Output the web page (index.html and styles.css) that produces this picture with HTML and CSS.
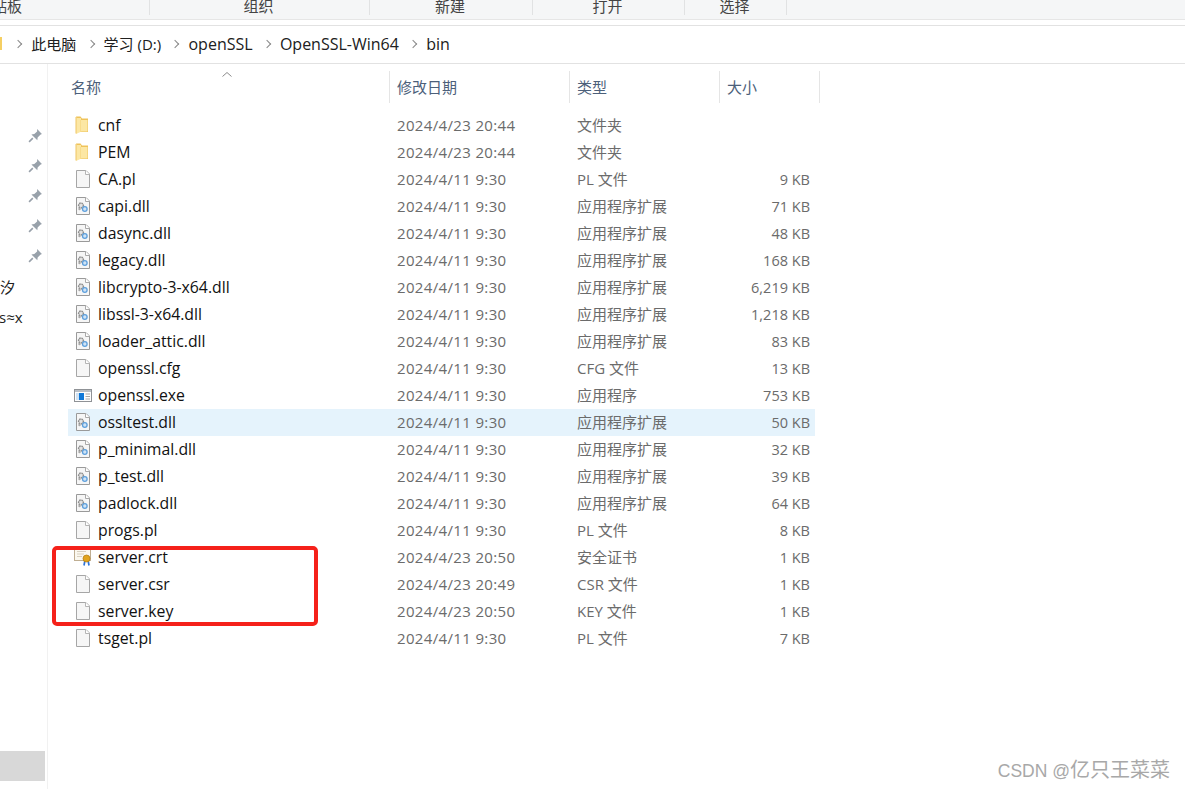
FILE: index.html
```html
<!DOCTYPE html>
<html lang="zh-CN">
<head>
    <meta charset="UTF-8">
    <title>bin</title>
    <link rel="stylesheet" href="styles.css">
</head>
<body>
    <svg class="defs" width="0" height="0">
        <symbol id="i-folder" viewBox="0 0 16 18">
            <path d="M1 .5h4.500l1.500 2h6v13.500H5z" fill="#efc35a"/>
            <path d="M1 1.500l1 .5h4v2h6.500v11.500H6.500L1 18z" fill="#fce7a4"/>
            <path d="M5.500 4v12" stroke="#f8dc8c" fill="none"/>
            <path d="M1 1v16.500" stroke="#eec565" fill="none"/>
        </symbol>
        <symbol id="i-file" viewBox="0 0 16 18">
            <path d="M1.500.5h9.500l3.500 3.500v13.500h-13z" fill="#f6f6f6" stroke="#a6a6a6"/>
            <path d="M10.500.5v4h4" fill="#fff" stroke="#b5b5b5"/>
        </symbol>
        <symbol id="i-dll" viewBox="0 0 16 18">
            <path d="M1.500.5h9.500l3.500 3.500v13.500h-13z" fill="#f6f6f6" stroke="#9a9a9a"/>
            <path d="M10.500.5v4h4" fill="#fff" stroke="#aaa"/>
            <circle cx="6" cy="8.500" r="2.400" fill="#e4e4e4" stroke="#8d8d8d" stroke-width="1.500" stroke-dasharray="1.500 .6"/>
            <circle cx="9.800" cy="12" r="2.300" fill="#cfe3f5" stroke="#5d9fdc" stroke-width="1.300"/>
            <circle cx="4.500" cy="12" r="1.200" fill="#a8a8a8"/>
        </symbol>
        <symbol id="i-exe" viewBox="0 0 20 18">
            <rect x="1.500" y="3.500" width="17" height="12" fill="#fdfdfd" stroke="#8f9296"/>
            <rect x="2" y="4" width="16" height="2" fill="#b9bfc6"/>
            <rect x="3" y="7" width="3" height="7" fill="#cfe2f4"/>
            <rect x="6" y="7" width="5" height="7" fill="#0f78d8"/>
            <path d="M12.500 8h4.500M12.500 10.500h4.500M12.500 13h4.500" stroke="#a8a8a8"/>
        </symbol>
        <symbol id="i-crt" viewBox="0 0 20 18">
            <rect x="1.500" y=".5" width="16" height="12" fill="#fbf8ef" stroke="#bfae92"/>
            <path d="M4 3.500h9M4 6h7M4 8.500h5" stroke="#d8d0bf"/>
            <path d="M12 12l-1 5.500M15 12l1 5.500" stroke="#2f74d8" stroke-width="1.700"/>
            <circle cx="13.500" cy="10.500" r="3.500" fill="#e2a41c" stroke="#b07a10" stroke-width=".7"/>
        </symbol>
        <symbol id="i-pin" viewBox="0 0 14 14">
            <path d="M8.500 1l4.500 4.500-1.500.7-2.500 2.600-.3 2.700-5.500-5.500 2.700-.3 2.600-2.500z" fill="#98a1aa"/>
            <path d="M4.500 9.500l-3.500 3.500" stroke="#98a1aa" stroke-width="1.500"/>
        </symbol>
    </svg>

    <div class="ribbon">
        <div class="ribbon-cell ribbon-first"><span>剪贴板</span></div>
        <div class="ribbon-cell"><span>组织</span></div>
        <div class="ribbon-cell"><span>新建</span></div>
        <div class="ribbon-cell"><span>打开</span></div>
        <div class="ribbon-cell"><span>选择</span></div>
    </div>

    <div class="address">
        <span class="addr-folder"></span>
        <span class="chev"></span><span class="crumb crumb-cjk">此电脑</span>
        <span class="chev"></span><span class="crumb crumb-cjk">学习 (D:)</span>
        <span class="chev"></span><span class="crumb">openSSL</span>
        <span class="chev"></span><span class="crumb">OpenSSL-Win64</span>
        <span class="chev"></span><span class="crumb">bin</span>
    </div>

    <div class="main">
        <!-- 左侧导航 -->
        <div class="nav">
            <svg class="pin"><use href="#i-pin"/></svg>
            <svg class="pin"><use href="#i-pin"/></svg>
            <svg class="pin"><use href="#i-pin"/></svg>
            <svg class="pin"><use href="#i-pin"/></svg>
            <svg class="pin"><use href="#i-pin"/></svg>
            <div class="nav-text">汐</div>
            <div class="nav-text nav-text-2">s≈x</div>
            <div class="nav-block"></div>
        </div>

        <!-- 文件列表 -->
        <div class="list">
            <div class="head">
                <div class="head-cell head-name">名称<svg class="sort" viewBox="0 0 10 5"><path d="M.5 4.500L5 .5l4.500 4" fill="none" stroke="#8a8a8a"/></svg></div>
                <div class="head-cell">修改日期</div>
                <div class="head-cell">类型</div>
                <div class="head-cell">大小</div>
            </div>
            <div class="rows">
                <div class="row"><div class="name"><svg class="ico"><use href="#i-folder"/></svg>cnf</div><div class="date">2024/4/23 20:44</div><div class="type">文件夹</div><div class="size"></div></div>
                <div class="row"><div class="name"><svg class="ico"><use href="#i-folder"/></svg>PEM</div><div class="date">2024/4/23 20:44</div><div class="type">文件夹</div><div class="size"></div></div>
                <div class="row"><div class="name"><svg class="ico"><use href="#i-file"/></svg>CA.pl</div><div class="date">2024/4/11 9:30</div><div class="type">PL 文件</div><div class="size">9 KB</div></div>
                <div class="row"><div class="name"><svg class="ico"><use href="#i-dll"/></svg>capi.dll</div><div class="date">2024/4/11 9:30</div><div class="type">应用程序扩展</div><div class="size">71 KB</div></div>
                <div class="row"><div class="name"><svg class="ico"><use href="#i-dll"/></svg>dasync.dll</div><div class="date">2024/4/11 9:30</div><div class="type">应用程序扩展</div><div class="size">48 KB</div></div>
                <div class="row"><div class="name"><svg class="ico"><use href="#i-dll"/></svg>legacy.dll</div><div class="date">2024/4/11 9:30</div><div class="type">应用程序扩展</div><div class="size">168 KB</div></div>
                <div class="row"><div class="name"><svg class="ico"><use href="#i-dll"/></svg>libcrypto-3-x64.dll</div><div class="date">2024/4/11 9:30</div><div class="type">应用程序扩展</div><div class="size">6,219 KB</div></div>
                <div class="row"><div class="name"><svg class="ico"><use href="#i-dll"/></svg>libssl-3-x64.dll</div><div class="date">2024/4/11 9:30</div><div class="type">应用程序扩展</div><div class="size">1,218 KB</div></div>
                <div class="row"><div class="name"><svg class="ico"><use href="#i-dll"/></svg>loader_attic.dll</div><div class="date">2024/4/11 9:30</div><div class="type">应用程序扩展</div><div class="size">83 KB</div></div>
                <div class="row"><div class="name"><svg class="ico"><use href="#i-file"/></svg>openssl.cfg</div><div class="date">2024/4/11 9:30</div><div class="type">CFG 文件</div><div class="size">13 KB</div></div>
                <div class="row"><div class="name"><svg class="ico ico-wide"><use href="#i-exe"/></svg>openssl.exe</div><div class="date">2024/4/11 9:30</div><div class="type">应用程序</div><div class="size">753 KB</div></div>
                <div class="row row-hover"><div class="name"><svg class="ico"><use href="#i-dll"/></svg>ossltest.dll</div><div class="date">2024/4/11 9:30</div><div class="type">应用程序扩展</div><div class="size">50 KB</div></div>
                <div class="row"><div class="name"><svg class="ico"><use href="#i-dll"/></svg>p_minimal.dll</div><div class="date">2024/4/11 9:30</div><div class="type">应用程序扩展</div><div class="size">32 KB</div></div>
                <div class="row"><div class="name"><svg class="ico"><use href="#i-dll"/></svg>p_test.dll</div><div class="date">2024/4/11 9:30</div><div class="type">应用程序扩展</div><div class="size">39 KB</div></div>
                <div class="row"><div class="name"><svg class="ico"><use href="#i-dll"/></svg>padlock.dll</div><div class="date">2024/4/11 9:30</div><div class="type">应用程序扩展</div><div class="size">64 KB</div></div>
                <div class="row"><div class="name"><svg class="ico"><use href="#i-file"/></svg>progs.pl</div><div class="date">2024/4/11 9:30</div><div class="type">PL 文件</div><div class="size">8 KB</div></div>
                <div class="row"><div class="name"><svg class="ico ico-wide"><use href="#i-crt"/></svg>server.crt</div><div class="date">2024/4/23 20:50</div><div class="type">安全证书</div><div class="size">1 KB</div></div>
                <div class="row"><div class="name"><svg class="ico"><use href="#i-file"/></svg>server.csr</div><div class="date">2024/4/23 20:49</div><div class="type">CSR 文件</div><div class="size">1 KB</div></div>
                <div class="row"><div class="name"><svg class="ico"><use href="#i-file"/></svg>server.key</div><div class="date">2024/4/23 20:50</div><div class="type">KEY 文件</div><div class="size">1 KB</div></div>
                <div class="row"><div class="name"><svg class="ico"><use href="#i-file"/></svg>tsget.pl</div><div class="date">2024/4/11 9:30</div><div class="type">PL 文件</div><div class="size">7 KB</div></div>
            </div>
        </div>
    </div>

    <!-- 标注红框和水印 -->
    <div class="mark"></div>
    <div class="watermark"><span class="wm-latin">CSDN @</span>亿只王菜菜</div>
</body>
</html>
```

FILE: styles.css
```css
* {
    margin: 0;
    padding: 0;
    box-sizing: border-box;
}
html, body {
    height: 100%;
    overflow: hidden;
}
body {
    background-color: #fff;
    color: #1a1a1a;
    font-family: "Open Sans", "Noto Sans CJK SC", sans-serif;
    font-size: 15px;
    position: relative;
}
.defs {
    position: absolute;
}

/* 顶部功能区 */
.ribbon {
    display: grid;
    grid-template-columns: 150px 220px 163px 152px 102px 1fr;
    height: 20px;
    background-color: #f5f6f7;
    border-bottom: 1px solid #e6e6e6;
    overflow: hidden;
}
.ribbon-cell {
    height: 15px;
    padding-right: 2px;
    border-right: 1px solid #e1e2e3;
    text-align: center;
    line-height: 13px;
    color: #444;
    font-size: 15px;
}
.ribbon-first {
    text-align: left;
    margin-left: -23px;
}

/* 地址栏 */
.address {
    display: flex;
    align-items: center;
    height: 39px;
    margin-top: 5px;
    padding-bottom: 2px;
    border-top: 1px solid #e2e2e2;
    border-bottom: 1px solid #e2e2e2;
    font-size: 16px;
    color: #202020;
}
.addr-folder {
    width: 2px;
    height: 13px;
    margin-right: 2px;
    background-color: #f5cf63;
}
.chev {
    width: 6px;
    height: 6px;
    margin: 0 10px 0 11.3px;
    border-top: 1.5px solid #888;
    border-right: 1.5px solid #888;
    transform: rotate(45deg);
    flex: none;
}
.crumb {
    white-space: nowrap;
}
.crumb-cjk {
    font-size: 15px;
}

/* 主体 */
.main {
    display: flex;
    height: 725px;
}
.nav {
    width: 48px;
    flex: none;
    border-right: 1px solid #f1f1f1;
    padding-top: 64px;
    display: flex;
    flex-direction: column;
}
.pin {
    width: 15px;
    height: 15px;
    margin: 0 0 15px 28px;
    flex: none;
}
.nav-text {
    height: 30px;
    line-height: 30px;
    margin-top: -6px;
    margin-bottom: 6px;
    font-size: 15px;
    color: #222;
    white-space: nowrap;
}
.nav-text-2 {
    margin-left: -1px;
}
.nav-block {
    width: 45px;
    height: 30px;
    margin-top: 413px;
    background-color: #d8d8d8;
}

/* 文件列表 */
.list {
    padding: 7px 0 0 20px;
    width: 772px;
}
.head {
    display: grid;
    grid-template-columns: 322px 180px 150px 100px;
    height: 32px;
}
.head-cell {
    border-right: 1px solid #e5e5e5;
    padding: 0 0 0 7px;
    line-height: 32px;
    font-size: 15px;
    color: #4c607a;
}
.head-name {
    padding-left: 3px;
    position: relative;
}
.sort {
    position: absolute;
    left: 154px;
    top: 1px;
    width: 10px;
    height: 5px;
}
.rows {
    padding-top: 9px;
}
.row {
    display: grid;
    grid-template-columns: 322px 180px 150px 95px;
    width: 747px;
    height: 27px;
    line-height: 26px;
    color: #6b6b6b;
    font-size: 14.5px;
}
.row > div {
    padding: 0 0 1px 7px;
    white-space: nowrap;
}
.row > .name {
    display: flex;
    align-items: center;
    color: #111;
    font-size: 15.8px;
}
.row > .date {
    font-size: 15px;
    letter-spacing: .35px;
}
.row > .type {
    font-size: 15px;
}
.row > .size {
    padding: 0 5px 0 0;
    line-height: 27px;
    text-align: right;
}
.row-hover {
    background-color: #e5f3fc;
}
.ico {
    width: 16px;
    height: 18px;
    margin-right: 7px;
    flex: none;
}
.ico-wide {
    width: 20px;
    margin: 0 5px 0 -2px;
}

/* 红色标注框 */
.mark {
    position: absolute;
    left: 52px;
    top: 546px;
    width: 266px;
    height: 80px;
    border: 4px solid #f5211a;
    border-radius: 5px;
}
.watermark {
    position: absolute;
    right: 15px;
    top: 758px;
    font-family: "Liberation Sans", "Noto Sans CJK SC", sans-serif;
    font-size: 20px;
    line-height: 24px;
    color: #a8a8a8;
}
.wm-latin {
    font-size: 17.5px;
}
```
